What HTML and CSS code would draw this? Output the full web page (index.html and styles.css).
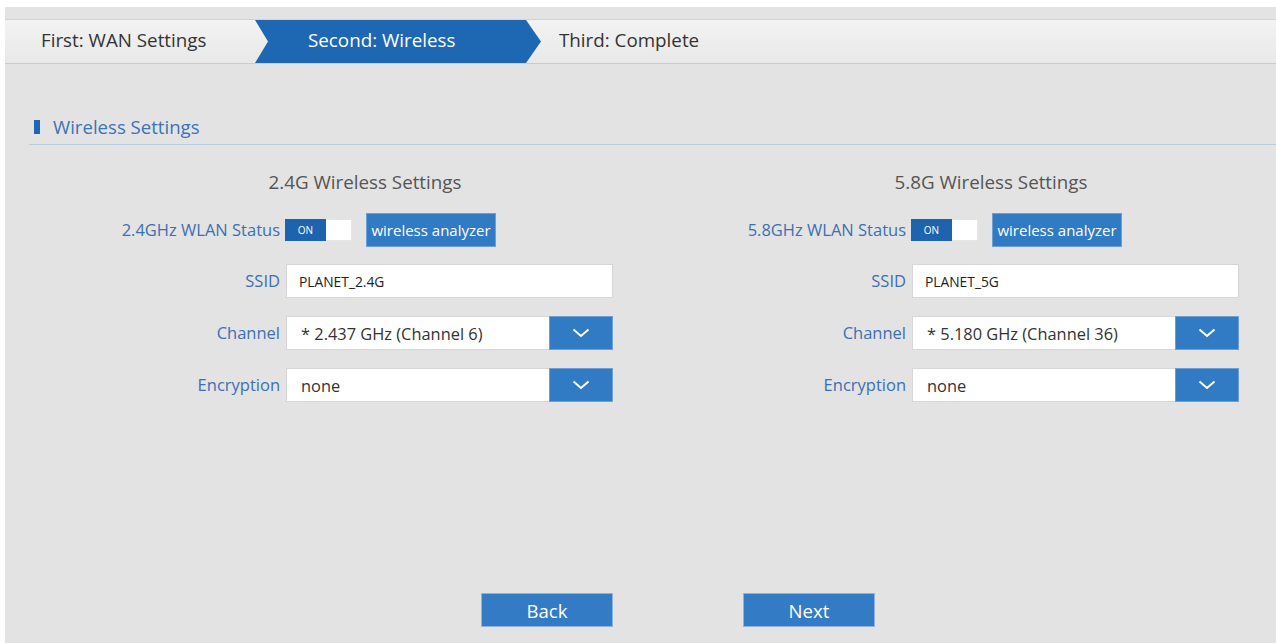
FILE: index.html
```html
<!DOCTYPE html>
<html lang="en">
<head>
<meta charset="utf-8">
<title>Quick Setup - Wireless</title>
<link rel="stylesheet" href="styles.css">
</head>
<body>
<div class="page">
  <div class="steps">
    <div class="step step-first">First: WAN Settings</div>
    <div class="step step-active">Second: Wireless</div>
    <div class="step step-last">Third: Complete</div>
  </div>

  <div class="section-title">
    <span class="section-mark"></span>
    <span class="section-text">Wireless Settings</span>
  </div>

  <div class="content">
    <div class="columns">
      <div class="band">
        <div class="band-title">2.4G Wireless Settings</div>
        <div class="row row-status">
          <label class="row-label">2.4GHz WLAN Status</label>
          <div class="row-field">
            <span class="toggle"><span class="toggle-on">ON</span><span class="toggle-off"></span></span>
            <button class="analyzer" type="button">wireless analyzer</button>
          </div>
        </div>
        <div class="row">
          <label class="row-label">SSID</label>
          <div class="row-field"><input class="text-input" type="text" value="PLANET_2.4G"></div>
        </div>
        <div class="row">
          <label class="row-label">Channel</label>
          <div class="row-field">
            <div class="select">
              <span class="select-value">* 2.437 GHz (Channel 6)</span>
              <span class="select-arrow"><svg width="18" height="10" viewBox="0 0 18 10"><path d="M1.5 1.5 L9 8 L16.5 1.5" fill="none" stroke="#fff" stroke-width="2"/></svg></span>
            </div>
          </div>
        </div>
        <div class="row">
          <label class="row-label">Encryption</label>
          <div class="row-field">
            <div class="select">
              <span class="select-value">none</span>
              <span class="select-arrow"><svg width="18" height="10" viewBox="0 0 18 10"><path d="M1.5 1.5 L9 8 L16.5 1.5" fill="none" stroke="#fff" stroke-width="2"/></svg></span>
            </div>
          </div>
        </div>
      </div>

      <div class="band">
        <div class="band-title">5.8G Wireless Settings</div>
        <div class="row row-status">
          <label class="row-label">5.8GHz WLAN Status</label>
          <div class="row-field">
            <span class="toggle"><span class="toggle-on">ON</span><span class="toggle-off"></span></span>
            <button class="analyzer" type="button">wireless analyzer</button>
          </div>
        </div>
        <div class="row">
          <label class="row-label">SSID</label>
          <div class="row-field"><input class="text-input" type="text" value="PLANET_5G"></div>
        </div>
        <div class="row">
          <label class="row-label">Channel</label>
          <div class="row-field">
            <div class="select">
              <span class="select-value">* 5.180 GHz (Channel 36)</span>
              <span class="select-arrow"><svg width="18" height="10" viewBox="0 0 18 10"><path d="M1.5 1.5 L9 8 L16.5 1.5" fill="none" stroke="#fff" stroke-width="2"/></svg></span>
            </div>
          </div>
        </div>
        <div class="row">
          <label class="row-label">Encryption</label>
          <div class="row-field">
            <div class="select">
              <span class="select-value">none</span>
              <span class="select-arrow"><svg width="18" height="10" viewBox="0 0 18 10"><path d="M1.5 1.5 L9 8 L16.5 1.5" fill="none" stroke="#fff" stroke-width="2"/></svg></span>
            </div>
          </div>
        </div>
      </div>
    </div>

    <div class="actions">
      <button class="action-btn" type="button">Back</button>
      <button class="action-btn" type="button">Next</button>
    </div>
  </div>
</div>
</body>
</html>
```

FILE: styles.css
```css
html, body {
  margin: 0;
  padding: 0;
  background: #ffffff;
  overflow: hidden;
}

body {
  font-family: "Open Sans", "Noto Sans", "Liberation Sans", sans-serif;
  color: #333;
}

.page {
  margin: 7px 0 0 5px;
  height: 636px;
  background: #e3e3e3;
  padding-top: 12px;
  box-sizing: border-box;
  overflow: hidden;
}

/* step indicator */
.steps {
  display: flex;
  height: 43px;
  border-top: 1px solid #d3d3d3;
  border-bottom: 1px solid #cbcbcb;
  background: linear-gradient(#f3f3f3, #e8e8e8);
}

.step {
  display: flex;
  align-items: center;
  font-size: 18.8px;
  color: #333;
  box-sizing: border-box;
  padding-bottom: 3px;
}

.step-first {
  width: 250px;
  padding-left: 36px;
}

.step-active {
  width: 286px;
  padding-left: 53px;
  color: #fff;
  background: #1e67b2;
  clip-path: polygon(0 0, 271px 0, 100% 50%, 271px 100%, 0 100%, 13px 50%);
}

.step-last {
  padding-left: 18px;
}

/* section heading */
.section-title {
  display: flex;
  align-items: center;
  margin: 50px 0 0 24px;
  padding: 0 0 4px 5px;
  border-bottom: 1px solid #b9cde2;
  height: 26px;
}

.section-mark {
  width: 6px;
  height: 14px;
  background: #1e67b2;
  margin-right: 13px;
}

.section-text {
  font-size: 18.6px;
  color: #3c72b9;
  line-height: 26px;
}

/* two band columns */
.content {
  width: 1252px;
  margin-left: 47px;
}

.columns {
  display: grid;
  grid-template-columns: 626px 626px;
}

.band-title {
  text-align: center;
  font-size: 18.8px;
  line-height: 24px;
  color: #555;
  margin-top: 25px;
  margin-bottom: 19px;
}

.row {
  display: flex;
  align-items: center;
  height: 34px;
  margin-bottom: 18px;
}

.row-status {
  margin-bottom: 17px;
}

.row-label {
  text-align: right;
  font-size: 16.5px;
  color: #3c6fb3;
  padding-right: 6px;
  padding-bottom: 2px;
  box-sizing: border-box;
  width: 234px;
}

.row-field {
  display: flex;
  align-items: center;
}

.toggle {
  display: flex;
  height: 22px;
  width: 67px;
  margin-left: -1px;
}

.toggle-on {
  width: 41px;
  background: #1e63ad;
  color: #fff;
  font-size: 10px;
  display: flex;
  align-items: center;
  justify-content: center;
}

.toggle-off {
  flex: 1;
  background: #fff;
  border: 1px solid #e6e6e6;
  border-left: none;
}

.analyzer {
  margin-left: 14px;
  height: 34px;
  width: 130px;
  padding: 0;
  border: 1px solid #6d9fd6;
  background: #317ac4;
  color: #fff;
  font-family: inherit;
  font-size: 15px;
}

.text-input {
  width: 327px;
  height: 34px;
  box-sizing: border-box;
  border: 1px solid #d6d6d6;
  background: #fff;
  padding: 0 0 0 12px;
  font-family: inherit;
  font-size: 13.8px;
  color: #222;
  outline: none;
}

.select {
  display: flex;
  width: 327px;
  height: 34px;
  box-sizing: border-box;
  border: 1px solid #d6d6d6;
  background: #fff;
}

.select-value {
  flex: 1;
  display: flex;
  align-items: center;
  padding-left: 14px;
  font-size: 16.4px;
  color: #333;
}

.select-arrow {
  width: 62px;
  margin: -1px -1px -1px 0;
  background: #317ac4;
  border: 1px solid #6d9fd6;
  display: flex;
  align-items: center;
  justify-content: center;
}

/* navigation buttons */
.actions {
  display: flex;
  justify-content: center;
  gap: 130px;
  margin-top: 173px;
}

.action-btn {
  width: 132px;
  height: 34px;
  padding: 0;
  border: 1px solid #8fb3dc;
  background: #337bc5;
  color: #fff;
  font-family: inherit;
  font-size: 18.6px;
}
```
